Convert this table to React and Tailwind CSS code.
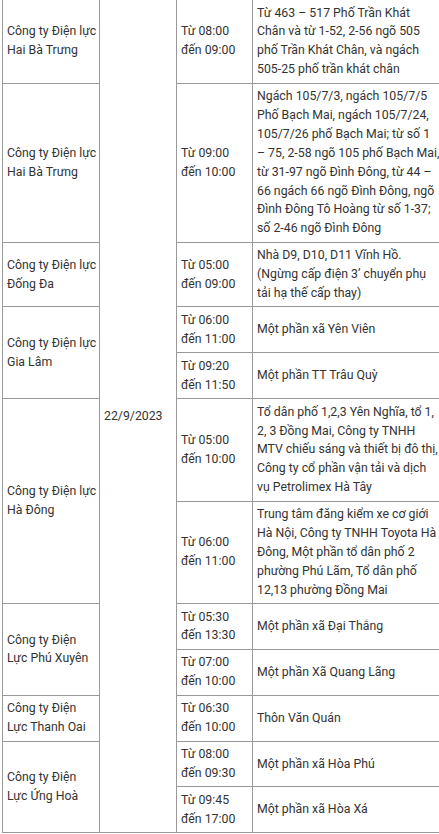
import React from "react";

const L = ({ lines }) => (
  <>
    {lines.map((t, i) => (
      <React.Fragment key={i}>
        {i > 0 && <br />}
        {t}
      </React.Fragment>
    ))}
  </>
);

const td = "border border-[#999] px-[4px] py-[3.55px] align-middle whitespace-nowrap";

const rows = [
  { c: ["Công ty Điện lực", "Hai Bà Trưng"], span: 1, t: ["Từ 08:00", "đến 09:00"], d: ["Từ 463 – 517 Phố Trần Khát", "Chân và từ 1-52, 2-56 ngõ 505", "phố Trần Khát Chân, và ngách", "505-25 phố trần khát chân"] },
  { c: ["Công ty Điện lực", "Hai Bà Trưng"], span: 1, t: ["Từ 09:00", "đến 10:00"], d: ["Ngách 105/7/3, ngách 105/7/5", "Phố Bạch Mai, ngách 105/7/24,", "105/7/26 phố Bạch Mai; từ số 1", "– 75, 2-58 ngõ 105 phố Bạch Mai,", "từ 31-97 ngõ Đình Đông, từ 44 –", "66 ngách 66 ngõ Đình Đông, ngõ", "Đình Đông Tô Hoàng từ số 1-37;", "số 2-46 ngõ Đình Đông"] },
  { c: ["Công ty Điện lực", "Đống Đa"], span: 1, t: ["Từ 05:00", "đến 09:00"], d: ["Nhà D9, D10, D11 Vĩnh Hồ.", "(Ngừng cấp điện 3’ chuyển phụ", "tải hạ thế cấp thay)"] },
  { c: ["Công ty Điện lực", "Gia Lâm"], span: 2, t: ["Từ 06:00", "đến 11:00"], d: ["Một phần xã Yên Viên"] },
  { t: ["Từ 09:20", "đến 11:50"], d: ["Một phần TT Trâu Quỳ"] },
  { c: ["Công ty Điện lực", "Hà Đông"], span: 2, t: ["Từ 05:00", "đến 10:00"], d: ["Tổ dân phố 1,2,3 Yên Nghĩa, tổ 1,", "2, 3 Đồng Mai, Công ty TNHH", "MTV chiếu sáng và thiết bị đô thị,", "Công ty cổ phần vận tải và dịch", "vụ Petrolimex Hà Tây"] },
  { t: ["Từ 06:00", "đến 11:00"], d: ["Trung tâm đăng kiểm xe cơ giới", "Hà Nội, Công ty TNHH Toyota Hà", "Đông, Một phần tổ dân phố 2", "phường Phú Lãm, Tổ dân phố", "12,13 phường Đồng Mai"] },
  { c: ["Công ty Điện", "Lực Phú Xuyên"], span: 2, t: ["Từ 05:30", "đến 13:30"], d: ["Một phần xã Đại Thắng"] },
  { t: ["Từ 07:00", "đến 10:00"], d: ["Một phần Xã Quang Lãng"] },
  { c: ["Công ty Điện", "Lực Thanh Oai"], span: 1, t: ["Từ 06:30", "đến 10:00"], d: ["Thôn Văn Quán"] },
  { c: ["Công ty Điện", "Lực Ứng Hoà"], span: 2, t: ["Từ 08:00", "đến 09:30"], d: ["Một phần xã Hòa Phú"] },
  { t: ["Từ 09:45", "đến 17:00"], d: ["Một phần xã Hòa Xá"] },
];

export default function App() {
  return (
    <div className="w-[439px] h-[834px] overflow-hidden bg-white">
      <table
        className="-mt-px ml-[2px] border-collapse table-fixed text-[12.3px] leading-[18.88px] text-[#333]"
        style={{ fontFamily: "Roboto, 'Noto Sans', sans-serif", width: 441 }}
      >
        <colgroup>
          <col className="w-[97px]" />
          <col className="w-[77px]" />
          <col className="w-[76px]" />
          <col className="w-[191px]" />
        </colgroup>
        <tbody>
          {rows.map((r, i) => (
            <tr key={i}>
              {r.c && (
                <td className={td} rowSpan={r.span}>
                  <L lines={r.c} />
                </td>
              )}
              {i === 0 && (
                <td className={td} rowSpan={12}>
                  22/9/2023
                </td>
              )}
              <td className={td}>
                <L lines={r.t} />
              </td>
              <td className={td}>
                <L lines={r.d} />
              </td>
            </tr>
          ))}
        </tbody>
      </table>
    </div>
  );
}
